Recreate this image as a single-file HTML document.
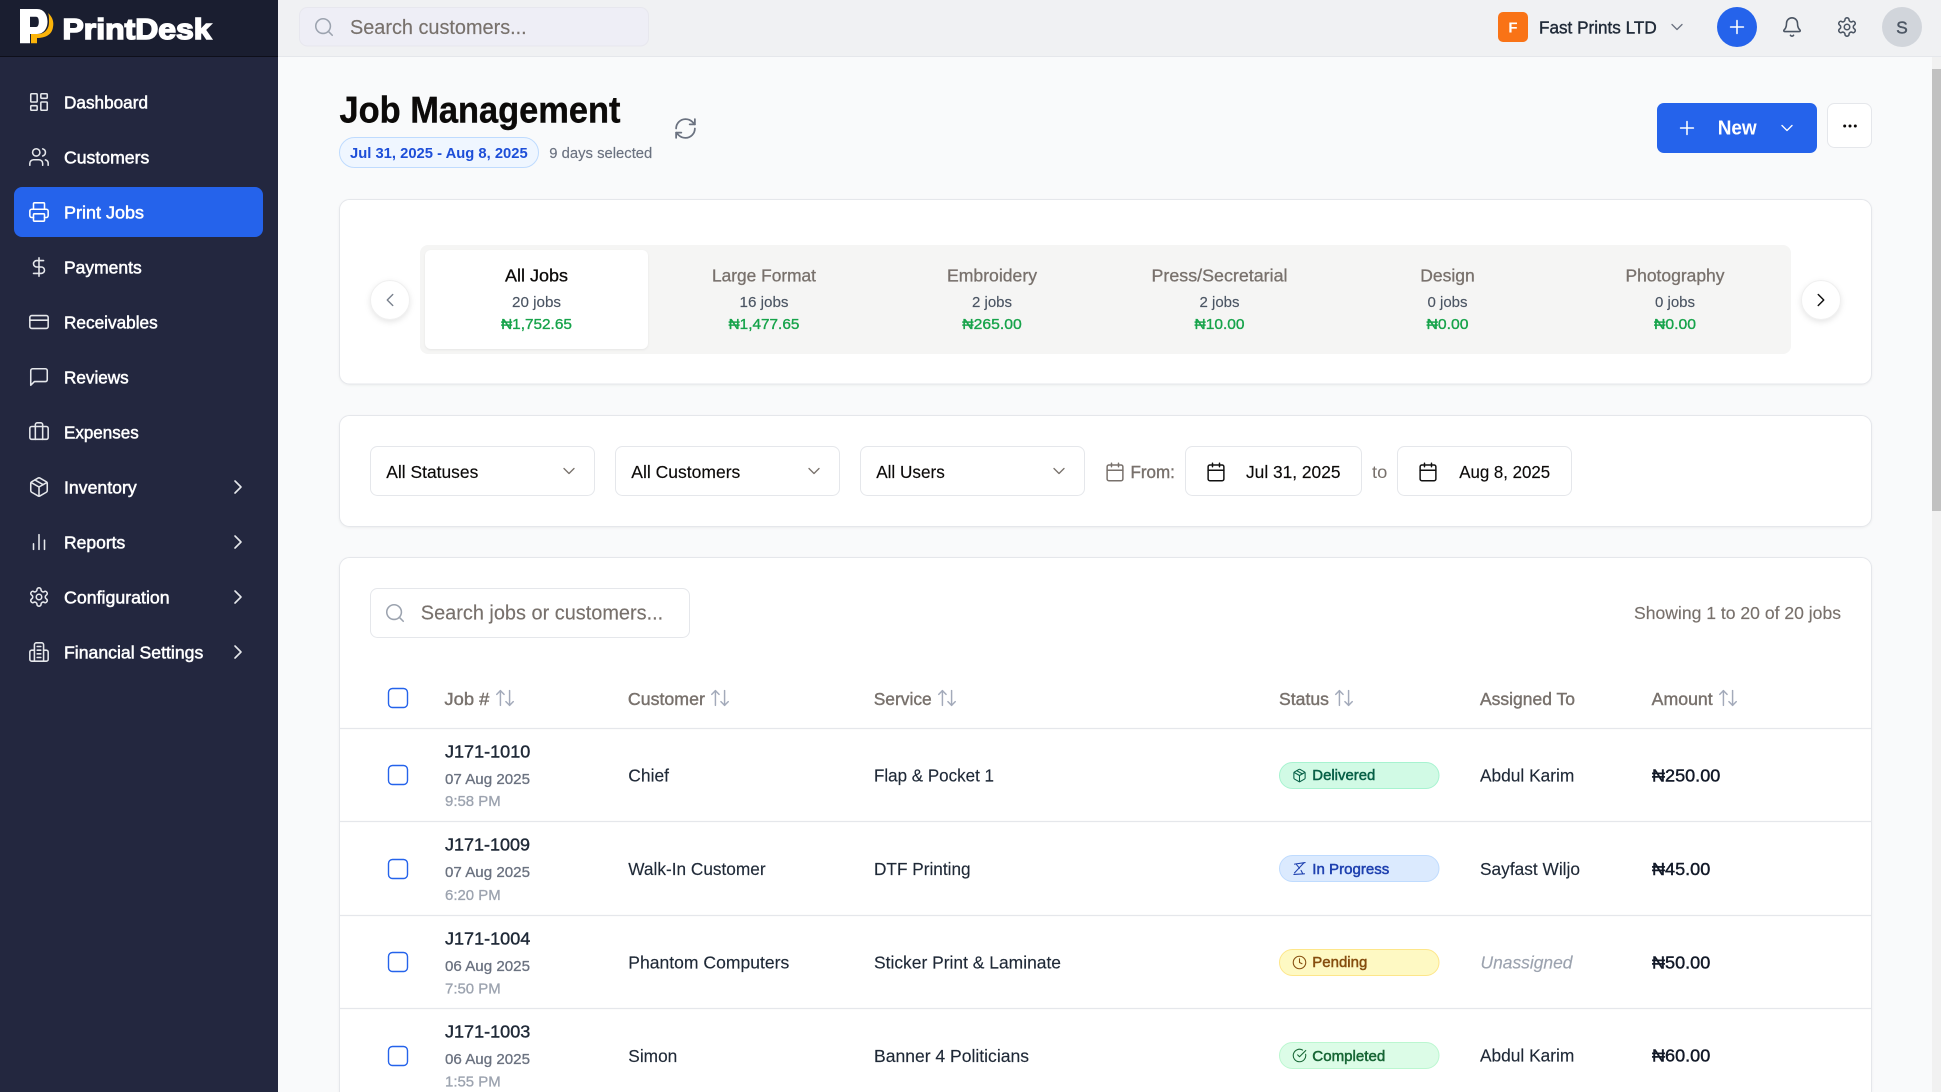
<!DOCTYPE html>
<html lang="en">
<head>
<meta charset="utf-8">
<title>Job Management - PrintDesk</title>
<style>
html,body{margin:0;padding:0;width:1941px;height:1092px;overflow:hidden;background:#f9fafb}
svg{display:block}
text{font-family:"Liberation Sans",Arial,sans-serif;font-size:17.5px;white-space:pre}
.ic{fill:none;stroke:currentColor;stroke-width:1.7;stroke-linecap:round;stroke-linejoin:round}
.chev{stroke-width:1.6}
.srt{stroke-width:1.6}
.nav{fill:#fff;stroke:#fff;stroke-width:.5;font-size:17.5px}
.card{fill:#fff;stroke:#e5e7eb;stroke-width:1;filter:drop-shadow(0 1px 1px rgba(0,0,0,.05))}
.box{fill:#fff;stroke:#e5e7eb;stroke-width:1}
.th{fill:#78716c;stroke:#78716c;stroke-width:.4}
.job{fill:#1f2937;stroke:#1f2937;stroke-width:.4}
.dt{fill:#6b7280;stroke:#6b7280;stroke-width:.3;font-size:15px}
.tm{fill:#9ca3af;stroke:#9ca3af;stroke-width:.3;font-size:15px}
.td{fill:#1f2937;stroke:#1f2937;stroke-width:.15}
.fs{fill:#0c0a09;stroke:#0c0a09;stroke-width:.15}
.amt{fill:#111827;stroke:#111827;stroke-width:.4}
.bd{font-size:15px;stroke-width:.5}
.tt{font-size:17.5px;fill:#78716c;stroke:#78716c;stroke-width:.3;text-anchor:middle}
.ts{font-size:15px;fill:#4b5563;stroke:#4b5563;stroke-width:.15;text-anchor:middle}
.ta{font-size:15px;fill:#16a34a;stroke:#16a34a;stroke-width:.35;text-anchor:middle}
.line{stroke:#e5e7eb;stroke-width:1.2}
.cb{fill:#fff;stroke:#2563eb;stroke-width:1.4}
</style>
</head>
<body>
<svg width="1941" height="1092" viewBox="0 0 1941 1092" xmlns="http://www.w3.org/2000/svg">
<defs>
<symbol id="i-dash" viewBox="0 0 24 24"><rect x="3" y="3" width="7" height="9" rx="1"/><rect x="14" y="3" width="7" height="5" rx="1"/><rect x="14" y="12" width="7" height="9" rx="1"/><rect x="3" y="16" width="7" height="5" rx="1"/></symbol>
<symbol id="i-users" viewBox="0 0 24 24"><path d="M16 21v-2a4 4 0 0 0-4-4H6a4 4 0 0 0-4 4v2"/><circle cx="9" cy="7" r="4"/><path d="M22 21v-2a4 4 0 0 0-3-3.87"/><path d="M16 3.13a4 4 0 0 1 0 7.75"/></symbol>
<symbol id="i-print" viewBox="0 0 24 24"><path d="M6 18H4a2 2 0 0 1-2-2v-5a2 2 0 0 1 2-2h16a2 2 0 0 1 2 2v5a2 2 0 0 1-2 2h-2"/><path d="M6 9V3a1 1 0 0 1 1-1h10a1 1 0 0 1 1 1v6"/><rect x="6" y="14" width="12" height="8" rx="1"/></symbol>
<symbol id="i-dollar" viewBox="0 0 24 24"><path d="M12 2v20"/><path d="M17 5H9.5a3.5 3.5 0 0 0 0 7h5a3.5 3.5 0 0 1 0 7H6"/></symbol>
<symbol id="i-card" viewBox="0 0 24 24"><rect x="2" y="5" width="20" height="14" rx="2"/><path d="M2 10h20"/></symbol>
<symbol id="i-msg" viewBox="0 0 24 24"><path d="M21 15a2 2 0 0 1-2 2H7l-4 4V5a2 2 0 0 1 2-2h14a2 2 0 0 1 2 2z"/></symbol>
<symbol id="i-brief" viewBox="0 0 24 24"><path d="M16 20V4a2 2 0 0 0-2-2h-4a2 2 0 0 0-2 2v16"/><rect x="2" y="6" width="20" height="14" rx="2"/></symbol>
<symbol id="i-pkg" viewBox="0 0 24 24"><path d="M11 21.73a2 2 0 0 0 2 0l7-4A2 2 0 0 0 21 16V8a2 2 0 0 0-1-1.73l-7-4a2 2 0 0 0-2 0l-7 4A2 2 0 0 0 3 8v8a2 2 0 0 0 1 1.73z"/><path d="M12 22V12"/><path d="M3.29 7 12 12l8.71-5"/><path d="m7.5 4.27 9 5.15"/></symbol>
<symbol id="i-bars" viewBox="0 0 24 24"><path d="M18 20V10"/><path d="M12 20V4"/><path d="M6 20v-6"/></symbol>
<symbol id="i-gear" viewBox="0 0 24 24"><path d="M12.22 2h-.44a2 2 0 0 0-2 2v.18a2 2 0 0 1-1 1.73l-.43.25a2 2 0 0 1-2 0l-.15-.08a2 2 0 0 0-2.73.73l-.22.38a2 2 0 0 0 .73 2.73l.15.1a2 2 0 0 1 1 1.72v.51a2 2 0 0 1-1 1.74l-.15.09a2 2 0 0 0-.73 2.73l.22.38a2 2 0 0 0 2.73.73l.15-.08a2 2 0 0 1 2 0l.43.25a2 2 0 0 1 1 1.73V20a2 2 0 0 0 2 2h.44a2 2 0 0 0 2-2v-.18a2 2 0 0 1 1-1.73l.43-.25a2 2 0 0 1 2 0l.15.08a2 2 0 0 0 2.73-.73l.22-.39a2 2 0 0 0-.73-2.73l-.15-.08a2 2 0 0 1-1-1.74v-.5a2 2 0 0 1 1-1.74l.15-.09a2 2 0 0 0 .73-2.73l-.22-.38a2 2 0 0 0-2.73-.73l-.15.08a2 2 0 0 1-2 0l-.43-.25a2 2 0 0 1-1-1.73V4a2 2 0 0 0-2-2z"/><circle cx="12" cy="12" r="3"/></symbol>
<symbol id="i-bank" viewBox="0 0 24 24"><path d="M7 22V4a2 2 0 0 1 2-2h6a2 2 0 0 1 2 2v18"/><path d="M7 10H4a2 2 0 0 0-2 2v8a2 2 0 0 0 2 2h16a2 2 0 0 0 2-2v-8a2 2 0 0 0-2-2h-3"/><path d="M10 6h4M10 10h4M10 14h4M10 18h4"/></symbol>
<symbol id="i-search" viewBox="0 0 24 24"><circle cx="11" cy="11" r="8"/><path d="m21 21-4.3-4.3"/></symbol>
<symbol id="i-bell" viewBox="0 0 24 24"><path d="M10.268 21a2 2 0 0 0 3.464 0"/><path d="M3.262 15.326A1 1 0 0 0 4 17h16a1 1 0 0 0 .74-1.673C19.41 13.956 18 12.499 18 8A6 6 0 0 0 6 8c0 4.499-1.411 5.956-2.738 7.326"/></symbol>
<symbol id="i-refresh" viewBox="0 0 24 24"><path d="M3 12a9 9 0 0 1 9-9 9.75 9.75 0 0 1 6.74 2.74L21 8"/><path d="M21 3v5h-5"/><path d="M21 12a9 9 0 0 1-9 9 9.75 9.75 0 0 1-6.74-2.74L3 16"/><path d="M8 16H3v5"/></symbol>
<symbol id="i-cal" viewBox="0 0 24 24"><path d="M8 2v4M16 2v4"/><rect x="3" y="4" width="18" height="18" rx="2"/><path d="M3 10h18"/></symbol>
<symbol id="i-down" viewBox="0 0 24 24"><path d="m6 9 6 6 6-6"/></symbol>
<symbol id="i-right" viewBox="0 0 24 24"><path d="m9 18 6-6-6-6"/></symbol>
<symbol id="i-left" viewBox="0 0 24 24"><path d="m15 18-6-6 6-6"/></symbol>
<symbol id="i-plus" viewBox="0 0 24 24"><path d="M5 12h14M12 5v14"/></symbol>
<symbol id="i-sort" viewBox="0 0 24 24"><path d="m21 16-4 4-4-4"/><path d="M17 20V4"/><path d="m3 8 4-4 4 4"/><path d="M7 4v16"/></symbol>
<symbol id="i-hour" viewBox="0 0 24 24"><path d="M4 5 21 2.5"/><path d="M19 3 4 19"/><path d="M3 21.5 20 20.5"/><path d="M7 5.5 12 11.5"/><path d="M14.5 15 17 20"/></symbol>
<symbol id="i-clock" viewBox="0 0 24 24"><circle cx="12" cy="12" r="10"/><path d="M12 6v6l4 2"/></symbol>
<symbol id="i-check" viewBox="0 0 24 24"><path d="M21.801 10A10 10 0 1 1 17 3.335"/><path d="m9 11 3 3L22 4"/></symbol>
</defs>

<!-- Main background -->
<rect width="1941" height="1092" fill="#f9fafb"/>

<!-- Sidebar -->
<g>
<rect width="278" height="1092" fill="#23273f"/>
<rect width="278" height="56" fill="#1a1e30"/>
<rect y="56" width="278" height="1" fill="#0e0f1a"/>
<path d="M48 13C53 17 54 23 53 27C52 35 45 38 37 38V43.3H31V34H38C45 34 49 29 49 22C49 18 49 15 48 13Z" fill="#fbb40a"/>
<path fill-rule="evenodd" d="M20 9H37C44 9 47.5 15 47.5 21.5C47.5 28 44 34 37 34H30V43.3H20ZM30 16.7V27H36C38 27 38.8 25 38.8 21.8C38.8 18.7 38 16.7 36 16.7Z" fill="#fff"/>
<text x="62.5" y="39" style="font-size:29px" font-weight="700" fill="#fff" stroke="#fff" stroke-width="1.5" textLength="149" lengthAdjust="spacingAndGlyphs">PrintDesk</text>

<rect x="14" y="187" width="249" height="50" rx="8" fill="#2563eb"/>

<g class="ic" color="#e5e7eb">
<use href="#i-dash" x="28" y="91" width="22" height="22"/>
<use href="#i-users" x="28" y="146" width="22" height="22"/>
<use href="#i-print" x="28" y="201" width="22" height="22" color="#fff"/>
<use href="#i-dollar" x="28" y="256" width="22" height="22"/>
<use href="#i-card" x="28" y="311" width="22" height="22"/>
<use href="#i-msg" x="28" y="366" width="22" height="22"/>
<use href="#i-brief" x="28" y="421" width="22" height="22"/>
<use href="#i-pkg" x="28" y="476" width="22" height="22"/>
<use href="#i-bars" x="28" y="531" width="22" height="22"/>
<use href="#i-gear" x="28" y="586" width="22" height="22"/>
<use href="#i-bank" x="28" y="641" width="22" height="22"/>
<use class="chev" href="#i-right" x="226" y="475" width="24" height="24"/>
<use class="chev" href="#i-right" x="226" y="530" width="24" height="24"/>
<use class="chev" href="#i-right" x="226" y="585" width="24" height="24"/>
<use class="chev" href="#i-right" x="226" y="640" width="24" height="24"/>
</g>
<text class="nav" x="64" y="108.5" textLength="84" lengthAdjust="spacingAndGlyphs">Dashboard</text>
<text class="nav" x="64" y="163.5" textLength="85.3" lengthAdjust="spacingAndGlyphs">Customers</text>
<text class="nav" x="64" y="218.5" textLength="80" lengthAdjust="spacingAndGlyphs">Print Jobs</text>
<text class="nav" x="64" y="273.5" textLength="77.7" lengthAdjust="spacingAndGlyphs">Payments</text>
<text class="nav" x="64" y="328.5" textLength="93.7" lengthAdjust="spacingAndGlyphs">Receivables</text>
<text class="nav" x="64" y="383.5" textLength="64.7" lengthAdjust="spacingAndGlyphs">Reviews</text>
<text class="nav" x="64" y="438.5" textLength="74.7" lengthAdjust="spacingAndGlyphs">Expenses</text>
<text class="nav" x="64" y="493.5" textLength="72.7" lengthAdjust="spacingAndGlyphs">Inventory</text>
<text class="nav" x="64" y="548.5" textLength="61.3" lengthAdjust="spacingAndGlyphs">Reports</text>
<text class="nav" x="64" y="603.5" textLength="105.7" lengthAdjust="spacingAndGlyphs">Configuration</text>
<text class="nav" x="64" y="658.5" textLength="139.3" lengthAdjust="spacingAndGlyphs">Financial Settings</text>
</g>

<!-- Top bar -->
<g>
<rect x="278" width="1663" height="56" fill="#f0f1f3"/>
<rect x="278" y="56" width="1663" height="1" fill="#e5e7eb"/>
<rect x="299.5" y="7.5" width="349" height="38.5" rx="8" fill="#eeeef6" stroke="#e7e7ee"/>
<use class="ic" color="#9ca3af" href="#i-search" x="313" y="16" width="22" height="22"/>
<text x="350" y="34" style="font-size:20px" fill="#78716c" stroke="#78716c" stroke-width=".15" textLength="176.7" lengthAdjust="spacingAndGlyphs">Search customers...</text>

<rect x="1498" y="12" width="30" height="30" rx="5" fill="#f97316"/>
<text x="1513" y="32.5" style="font-size:15px" font-weight="700" fill="#fff" text-anchor="middle">F</text>
<text x="1539" y="33.3" fill="#1f2937" stroke="#1f2937" stroke-width=".4" textLength="117.7" lengthAdjust="spacingAndGlyphs">Fast Prints LTD</text>
<use class="ic chev" color="#6b7280" href="#i-down" x="1667" y="17" width="20" height="20"/>
<circle cx="1737" cy="27" r="20" fill="#2563eb"/>
<use class="ic" color="#fff" href="#i-plus" x="1726" y="16" width="22" height="22"/>
<use class="ic" color="#4b5563" href="#i-bell" x="1781" y="16" width="22" height="22"/>
<use class="ic" color="#4b5563" href="#i-gear" x="1836" y="16" width="22" height="22"/>
<circle cx="1902" cy="27" r="20" fill="#d1d5db"/>
<text x="1902" y="33.5" fill="#4b5563" stroke="#4b5563" stroke-width=".4" text-anchor="middle">S</text>
</g>

<!-- Page heading -->
<g>
<text x="339.5" y="122.3" style="font-size:37.5px" font-weight="700" fill="#0c0a09" stroke="#0c0a09" stroke-width=".4" textLength="281" lengthAdjust="spacingAndGlyphs">Job Management</text>
<rect x="339.5" y="137.5" width="199" height="30" rx="15" fill="#eff6ff" stroke="#bfdbfe"/>
<text x="350" y="157.8" style="font-size:15px" font-weight="700" fill="#1d4ed8" textLength="177.7" lengthAdjust="spacingAndGlyphs">Jul 31, 2025 - Aug 8, 2025</text>
<text x="549.3" y="157.8" style="font-size:15px" fill="#6b7280" stroke="#6b7280" stroke-width=".15" textLength="103" lengthAdjust="spacingAndGlyphs">9 days selected</text>
<use class="ic" color="#6b7280" href="#i-refresh" x="673" y="116" width="25" height="25"/>

<rect x="1657" y="103" width="160" height="50" rx="7" fill="#2563eb"/>
<use class="ic" color="#fff" href="#i-plus" x="1676" y="117" width="22" height="22"/>
<text x="1717.7" y="134.3" style="font-size:20px" font-weight="700" fill="#fff" textLength="39" lengthAdjust="spacingAndGlyphs">New</text>
<use class="ic chev" color="#fff" href="#i-down" x="1777" y="118" width="20" height="20"/>
<rect class="box" x="1827.5" y="103.5" width="44" height="44" rx="7"/>
<circle cx="1844.7" cy="126" r="1.5" fill="#0c0a09"/><circle cx="1850" cy="126" r="1.5" fill="#0c0a09"/><circle cx="1855.3" cy="126" r="1.5" fill="#0c0a09"/>
</g>

<!-- Category tabs card -->
<g>
<rect class="card" x="339.5" y="199.5" width="1532" height="184.5" rx="10"/>
<rect x="420" y="245" width="1371" height="109" rx="8" fill="#f5f5f4"/>
<rect x="425" y="250" width="223" height="99" rx="6" fill="#fff" style="filter:drop-shadow(0 1px 1px rgba(0,0,0,.06))"/>
<circle cx="390" cy="300" r="19.5" fill="#fff" stroke="#f0f0f0" style="filter:drop-shadow(0 2px 3px rgba(0,0,0,.1))"/>
<use class="ic" color="#78808c" href="#i-left" x="379" y="289" width="22" height="22" style="stroke-width:1.5"/>
<circle cx="1821" cy="300" r="19.5" fill="#fff" stroke="#f0f0f0" style="filter:drop-shadow(0 2px 3px rgba(0,0,0,.1))"/>
<use class="ic chev" color="#111" href="#i-right" x="1810" y="289" width="22" height="22"/>

<text class="tt" x="536.5" y="281.7" style="fill:#0c0a09;stroke:#0c0a09" textLength="63" lengthAdjust="spacingAndGlyphs">All Jobs</text>
<text class="ts" x="536.5" y="307" textLength="49" lengthAdjust="spacingAndGlyphs">20 jobs</text>
<text class="ta" x="536.5" y="329" textLength="70.8" lengthAdjust="spacingAndGlyphs">₦1,752.65</text>

<text class="tt" x="764" y="281.7" textLength="104" lengthAdjust="spacingAndGlyphs">Large Format</text>
<text class="ts" x="764" y="307" textLength="49" lengthAdjust="spacingAndGlyphs">16 jobs</text>
<text class="ta" x="764" y="329" textLength="70.8" lengthAdjust="spacingAndGlyphs">₦1,477.65</text>

<text class="tt" x="992" y="281.7" textLength="90" lengthAdjust="spacingAndGlyphs">Embroidery</text>
<text class="ts" x="992" y="307" textLength="40" lengthAdjust="spacingAndGlyphs">2 jobs</text>
<text class="ta" x="992" y="329" textLength="59.4" lengthAdjust="spacingAndGlyphs">₦265.00</text>

<text class="tt" x="1219.5" y="281.7" textLength="136" lengthAdjust="spacingAndGlyphs">Press/Secretarial</text>
<text class="ts" x="1219.5" y="307" textLength="40" lengthAdjust="spacingAndGlyphs">2 jobs</text>
<text class="ta" x="1219.5" y="329" textLength="50" lengthAdjust="spacingAndGlyphs">₦10.00</text>

<text class="tt" x="1447.5" y="281.7" textLength="54.5" lengthAdjust="spacingAndGlyphs">Design</text>
<text class="ts" x="1447.5" y="307" textLength="40" lengthAdjust="spacingAndGlyphs">0 jobs</text>
<text class="ta" x="1447.5" y="329" textLength="42" lengthAdjust="spacingAndGlyphs">₦0.00</text>

<text class="tt" x="1675" y="281.7" textLength="99" lengthAdjust="spacingAndGlyphs">Photography</text>
<text class="ts" x="1675" y="307" textLength="40" lengthAdjust="spacingAndGlyphs">0 jobs</text>
<text class="ta" x="1675" y="329" textLength="42" lengthAdjust="spacingAndGlyphs">₦0.00</text>
</g>

<!-- Filters card -->
<g>
<rect class="card" x="339.5" y="415.5" width="1532" height="111" rx="10"/>
<rect class="box" x="370.5" y="446.5" width="224" height="49" rx="7"/>
<rect class="box" x="615.5" y="446.5" width="224" height="49" rx="7"/>
<rect class="box" x="860.5" y="446.5" width="224" height="49" rx="7"/>
<text class="fs" x="386.3" y="477.8" textLength="92" lengthAdjust="spacingAndGlyphs">All Statuses</text>
<text class="fs" x="631.3" y="477.8" textLength="109" lengthAdjust="spacingAndGlyphs">All Customers</text>
<text class="fs" x="876.2" y="477.8" textLength="68.6" lengthAdjust="spacingAndGlyphs">All Users</text>
<use class="ic chev" color="#78716c" href="#i-down" x="559" y="461" width="20" height="20"/>
<use class="ic chev" color="#78716c" href="#i-down" x="804" y="461" width="20" height="20"/>
<use class="ic chev" color="#78716c" href="#i-down" x="1049" y="461" width="20" height="20"/>
<use class="ic" color="#78716c" href="#i-cal" x="1104.5" y="461.5" width="21" height="21"/>
<text class="th" x="1130.5" y="477.8" textLength="44.4" lengthAdjust="spacingAndGlyphs">From:</text>
<rect class="box" x="1185.5" y="446.5" width="176" height="49" rx="7"/>
<use class="ic" color="#111" href="#i-cal" x="1205.5" y="461.5" width="21" height="21"/>
<text class="fs" x="1246" y="477.8" textLength="94.5" lengthAdjust="spacingAndGlyphs">Jul 31, 2025</text>
<text x="1372" y="477.8" fill="#78716c" textLength="15.3" lengthAdjust="spacingAndGlyphs">to</text>
<rect class="box" x="1397.5" y="446.5" width="174" height="49" rx="7"/>
<use class="ic" color="#111" href="#i-cal" x="1417.5" y="461.5" width="21" height="21"/>
<text class="fs" x="1459.2" y="477.8" textLength="91" lengthAdjust="spacingAndGlyphs">Aug 8, 2025</text>
</g>

<!-- Jobs table card -->
<g>
<rect class="card" x="339.5" y="557.5" width="1532" height="560" rx="10"/>
<rect class="box" x="370.5" y="588.5" width="319" height="49" rx="7"/>
<use class="ic" color="#9ca3af" href="#i-search" x="384" y="602" width="22" height="22"/>
<text x="420.8" y="619.5" style="font-size:20px" fill="#78716c" stroke="#78716c" stroke-width=".15" textLength="242.4" lengthAdjust="spacingAndGlyphs">Search jobs or customers...</text>
<text x="1634" y="619" fill="#78716c" stroke="#78716c" stroke-width=".15" textLength="207" lengthAdjust="spacingAndGlyphs">Showing 1 to 20 of 20 jobs</text>

<rect class="cb" x="388.5" y="688.5" width="19" height="19" rx="4"/>
<text class="th" x="444.4" y="705" textLength="45" lengthAdjust="spacingAndGlyphs">Job #</text>
<use class="ic srt" color="#a3aaba" href="#i-sort" x="494" y="687" width="22" height="22"/>
<text class="th" x="627.9" y="705" textLength="77" lengthAdjust="spacingAndGlyphs">Customer</text>
<use class="ic srt" color="#a3aaba" href="#i-sort" x="709" y="687" width="22" height="22"/>
<text class="th" x="873.7" y="705" textLength="58" lengthAdjust="spacingAndGlyphs">Service</text>
<use class="ic srt" color="#a3aaba" href="#i-sort" x="936" y="687" width="22" height="22"/>
<text class="th" x="1279" y="705" textLength="50" lengthAdjust="spacingAndGlyphs">Status</text>
<use class="ic srt" color="#a3aaba" href="#i-sort" x="1333" y="687" width="22" height="22"/>
<text class="th" x="1480" y="705" textLength="95" lengthAdjust="spacingAndGlyphs">Assigned To</text>
<text class="th" x="1651.7" y="705" textLength="61" lengthAdjust="spacingAndGlyphs">Amount</text>
<use class="ic srt" color="#a3aaba" href="#i-sort" x="1717" y="687" width="22" height="22"/>

<path class="line" d="M340 728.5H1871M340 821.5H1871M340 915.5H1871M340 1008.5H1871"/>

<!-- Row 1 -->
<rect class="cb" x="388.5" y="765.5" width="19" height="19" rx="4"/>
<text class="job" x="445" y="757.5" textLength="85.3" lengthAdjust="spacingAndGlyphs">J171-1010</text>
<text class="dt" x="445" y="783.8" textLength="85" lengthAdjust="spacingAndGlyphs">07 Aug 2025</text>
<text class="tm" x="445" y="805.8" textLength="55.7" lengthAdjust="spacingAndGlyphs">9:58 PM</text>
<text class="td" x="628.3" y="781.5" textLength="40.7" lengthAdjust="spacingAndGlyphs">Chief</text>
<text class="td" x="874" y="781.5" textLength="120" lengthAdjust="spacingAndGlyphs">Flap &amp; Pocket 1</text>
<rect x="1279.5" y="762.5" width="159.5" height="26" rx="13" fill="#d1fae5" stroke="#a7f3d0"/>
<use class="ic" color="#065f46" href="#i-pkg" x="1292" y="768" width="15" height="15"/>
<text class="bd" x="1312.3" y="780" fill="#065f46" stroke="#065f46" textLength="63" lengthAdjust="spacingAndGlyphs">Delivered</text>
<text class="td" x="1480" y="781.5" textLength="94.3" lengthAdjust="spacingAndGlyphs">Abdul Karim</text>
<text class="amt" x="1652" y="781.5" textLength="68.3" lengthAdjust="spacingAndGlyphs">₦250.00</text>

<!-- Row 2 -->
<rect class="cb" x="388.5" y="859.5" width="19" height="19" rx="4"/>
<text class="job" x="445" y="850.5" textLength="85" lengthAdjust="spacingAndGlyphs">J171-1009</text>
<text class="dt" x="445" y="876.8" textLength="85" lengthAdjust="spacingAndGlyphs">07 Aug 2025</text>
<text class="tm" x="445" y="899.8" textLength="55.7" lengthAdjust="spacingAndGlyphs">6:20 PM</text>
<text class="td" x="628.3" y="874.8" textLength="137.3" lengthAdjust="spacingAndGlyphs">Walk-In Customer</text>
<text class="td" x="874" y="874.8" textLength="96.6" lengthAdjust="spacingAndGlyphs">DTF Printing</text>
<rect x="1279.5" y="855.5" width="159.5" height="26" rx="13" fill="#dbeafe" stroke="#bfdbfe"/>
<use class="ic" color="#1e40af" href="#i-hour" x="1292" y="861" width="15" height="15"/>
<text class="bd" x="1312.3" y="874" fill="#1e40af" stroke="#1e40af" textLength="77" lengthAdjust="spacingAndGlyphs">In Progress</text>
<text class="td" x="1480" y="874.8" textLength="100" lengthAdjust="spacingAndGlyphs">Sayfast Wiljo</text>
<text class="amt" x="1652" y="874.8" textLength="58.3" lengthAdjust="spacingAndGlyphs">₦45.00</text>

<!-- Row 3 -->
<rect class="cb" x="388.5" y="952.5" width="19" height="19" rx="4"/>
<text class="job" x="445" y="944.5" textLength="85.3" lengthAdjust="spacingAndGlyphs">J171-1004</text>
<text class="dt" x="445" y="970.8" textLength="85" lengthAdjust="spacingAndGlyphs">06 Aug 2025</text>
<text class="tm" x="445" y="993.5" textLength="55.7" lengthAdjust="spacingAndGlyphs">7:50 PM</text>
<text class="td" x="628.3" y="968.5" textLength="161" lengthAdjust="spacingAndGlyphs">Phantom Computers</text>
<text class="td" x="874" y="968.5" textLength="187" lengthAdjust="spacingAndGlyphs">Sticker Print &amp; Laminate</text>
<rect x="1279.5" y="949.5" width="159.5" height="26" rx="13" fill="#fef9c3" stroke="#fde68a"/>
<use class="ic" color="#854d0e" href="#i-clock" x="1292" y="955" width="15" height="15"/>
<text class="bd" x="1312.3" y="967" fill="#854d0e" stroke="#854d0e" textLength="55" lengthAdjust="spacingAndGlyphs">Pending</text>
<text x="1480.5" y="968.5" font-style="italic" fill="#9ca3af" stroke="#9ca3af" stroke-width=".15" textLength="92" lengthAdjust="spacingAndGlyphs">Unassigned</text>
<text class="amt" x="1652" y="968.5" textLength="58.3" lengthAdjust="spacingAndGlyphs">₦50.00</text>

<!-- Row 4 -->
<rect class="cb" x="388.5" y="1046.5" width="19" height="19" rx="4"/>
<text class="job" x="445" y="1037.5" textLength="85.3" lengthAdjust="spacingAndGlyphs">J171-1003</text>
<text class="dt" x="445" y="1063.8" textLength="85" lengthAdjust="spacingAndGlyphs">06 Aug 2025</text>
<text class="tm" x="445" y="1086.5" textLength="55.7" lengthAdjust="spacingAndGlyphs">1:55 PM</text>
<text class="td" x="628.3" y="1061.8" textLength="49" lengthAdjust="spacingAndGlyphs">Simon</text>
<text class="td" x="874" y="1061.8" textLength="155" lengthAdjust="spacingAndGlyphs">Banner 4 Politicians</text>
<rect x="1279.5" y="1042.5" width="159.5" height="26" rx="13" fill="#dcfce7" stroke="#bbf7d0"/>
<use class="ic" color="#166534" href="#i-check" x="1292" y="1048" width="15" height="15"/>
<text class="bd" x="1312.3" y="1061" fill="#166534" stroke="#166534" textLength="73" lengthAdjust="spacingAndGlyphs">Completed</text>
<text class="td" x="1480" y="1061.5" textLength="94.3" lengthAdjust="spacingAndGlyphs">Abdul Karim</text>
<text class="amt" x="1652" y="1061.5" textLength="58.3" lengthAdjust="spacingAndGlyphs">₦60.00</text>
</g>

<!-- Scrollbar -->
<rect x="1932" y="57" width="9" height="1035" fill="#f1f1f1"/>
<rect x="1932" y="69" width="9" height="442" fill="#c1c1c1"/>
</svg>
</body>
</html>
